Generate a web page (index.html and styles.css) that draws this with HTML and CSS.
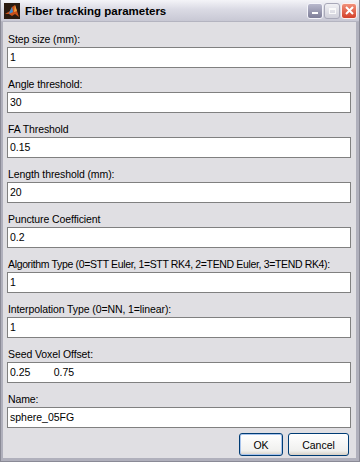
FILE: index.html
```html
<!DOCTYPE html>
<html lang="en">
<head>
    <meta charset="UTF-8">
    <title>Fiber tracking parameters</title>
    <link rel="stylesheet" href="styles.css">
</head>
<body>
    <div class="window">
        <div class="title-bar">
            <div class="title-icon">
                <svg width="16" height="16" viewBox="0 0 16 16">
                    <rect width="16" height="16" fill="#2a1a10"/>
                    <path d="M1 11 L6 8 L8 4 L11 2 L13 8 L15 14 L11 11 L8 13 L5 11 Z" fill="#c8501a"/>
                    <path d="M6 8 L8 4 L9 9 L5 11 Z" fill="#3a8ad0"/>
                    <path d="M11 2 L13 8 L10 9 Z" fill="#f0a040"/>
                </svg>
            </div>
            <div class="title-text">Fiber tracking parameters</div>
            <div class="title-buttons">
                <div class="tb-btn tb-min"><span></span></div>
                <div class="tb-btn tb-max"><span></span></div>
                <div class="tb-btn tb-close">
                    <svg width="9" height="9" viewBox="0 0 9 9">
                        <path d="M1 1 L8 8 M8 1 L1 8" stroke="#fff" stroke-width="2"/>
                    </svg>
                </div>
            </div>
        </div>

        <div class="content">
            <div class="field">
                <label>Step size (mm):</label>
                <div class="input">1</div>
            </div>
            <div class="field">
                <label>Angle threshold:</label>
                <div class="input">30</div>
            </div>
            <div class="field">
                <label>FA Threshold</label>
                <div class="input">0.15</div>
            </div>
            <div class="field">
                <label>Length threshold (mm):</label>
                <div class="input">20</div>
            </div>
            <div class="field">
                <label>Puncture Coefficient</label>
                <div class="input">0.2</div>
            </div>
            <div class="field">
                <label class="long">Algorithm Type (0=STT Euler, 1=STT RK4, 2=TEND Euler, 3=TEND RK4):</label>
                <div class="input">1</div>
            </div>
            <div class="field">
                <label>Interpolation Type (0=NN, 1=linear):</label>
                <div class="input">1</div>
            </div>
            <div class="field">
                <label>Seed Voxel Offset:</label>
                <div class="input">0.25&nbsp;&nbsp;&nbsp;&nbsp;&nbsp;&nbsp;&nbsp;&nbsp;0.75</div>
            </div>
            <div class="field">
                <label>Name:</label>
                <div class="input">sphere_05FG</div>
            </div>

            <div class="buttons">
                <button class="btn btn-ok">OK</button>
                <button class="btn">Cancel</button>
            </div>
        </div>
    </div>
</body>
</html>
```

FILE: styles.css
```css
body {
    margin: 0;
    padding: 0;
    font-family: 'Liberation Sans', Arial, sans-serif;
    background-color: #e0dfe3;
}

.window {
    width: 360px;
    height: 462px;
    box-sizing: border-box;
    background-color: #e0dfe3;
    border: 1px solid #8a8a96;
    border-top: none;
    display: flex;
    flex-direction: column;
}

/* 标题栏 */
.title-bar {
    height: 21px;
    display: flex;
    align-items: center;
    padding: 0 2px 0 3px;
    background: linear-gradient(#f4f4f8, #dadae4 45%, #c8c8d4);
    border-bottom: 1px solid #b4b4c0;
}

.title-icon {
    width: 16px;
    height: 16px;
    margin-right: 5px;
}

.title-icon svg {
    display: block;
}

.title-text {
    flex: 1;
    font-family: 'Liberation Sans', Arial, sans-serif;
    font-weight: bold;
    font-size: 11.5px;
    color: #000;
}

.title-buttons {
    display: flex;
    gap: 1px;
}

.tb-btn {
    width: 14px;
    height: 14px;
    border-radius: 3px;
    border: 1px solid #fff;
    display: flex;
    align-items: center;
    justify-content: center;
}

.tb-min {
    background: linear-gradient(#b8b8cc, #7e7e98);
    border-color: #f4f4fa;
}

.tb-min span {
    width: 6px;
    height: 2px;
    background: #fff;
    margin-top: 5px;
}

.tb-max {
    background: linear-gradient(#f0f0f4, #d0d0da);
    border-color: #a8a8b8;
}

.tb-max span {
    width: 7px;
    height: 6px;
    border: 1px solid #fafafa;
    border-top-width: 2px;
    box-sizing: border-box;
}

.tb-close {
    background: linear-gradient(#f0907a, #d4402a);
    border-color: #fff0ee;
}

.tb-close svg {
    display: block;
}

/* 内容区域 */
.content {
    flex: 1;
    padding: 11px 5px 0 4px;
    border-left: 2px solid #b0b0bc;
    border-right: 3px solid #b0b0bc;
    border-bottom: 3px solid #b0b0bc;
    display: flex;
    flex-direction: column;
}

.field {
    display: flex;
    flex-direction: column;
    margin-bottom: 10px;
}

.field label {
    font-size: 10.5px;
    letter-spacing: -0.1px;
    color: #000;
    height: 13px;
    line-height: 13px;
    margin-bottom: 1px;
    padding-left: 1px;
    white-space: nowrap;
}

.field label.long {
    letter-spacing: -0.35px;
}

.input {
    height: 19px;
    line-height: 19px;
    background-color: #fff;
    border: 1px solid #808080;
    padding-left: 2px;
    font-size: 10.5px;
    color: #000;
}

.buttons {
    display: flex;
    justify-content: flex-end;
    gap: 5px;
    margin-top: -5px;
    padding-right: 2px;
}

.btn {
    height: 23px;
    padding: 0;
    font-family: 'Liberation Sans', Arial, sans-serif;
    font-size: 10.5px;
    color: #000;
    border: 1px solid #003c74;
    border-radius: 3px;
    background: linear-gradient(#ffffff, #f0f0ee 80%, #d6d0c5);
    width: 61px;
}

.btn-ok {
    width: 44px;
    box-shadow: inset 0 0 0 1px #a8c4ec;
}
```
